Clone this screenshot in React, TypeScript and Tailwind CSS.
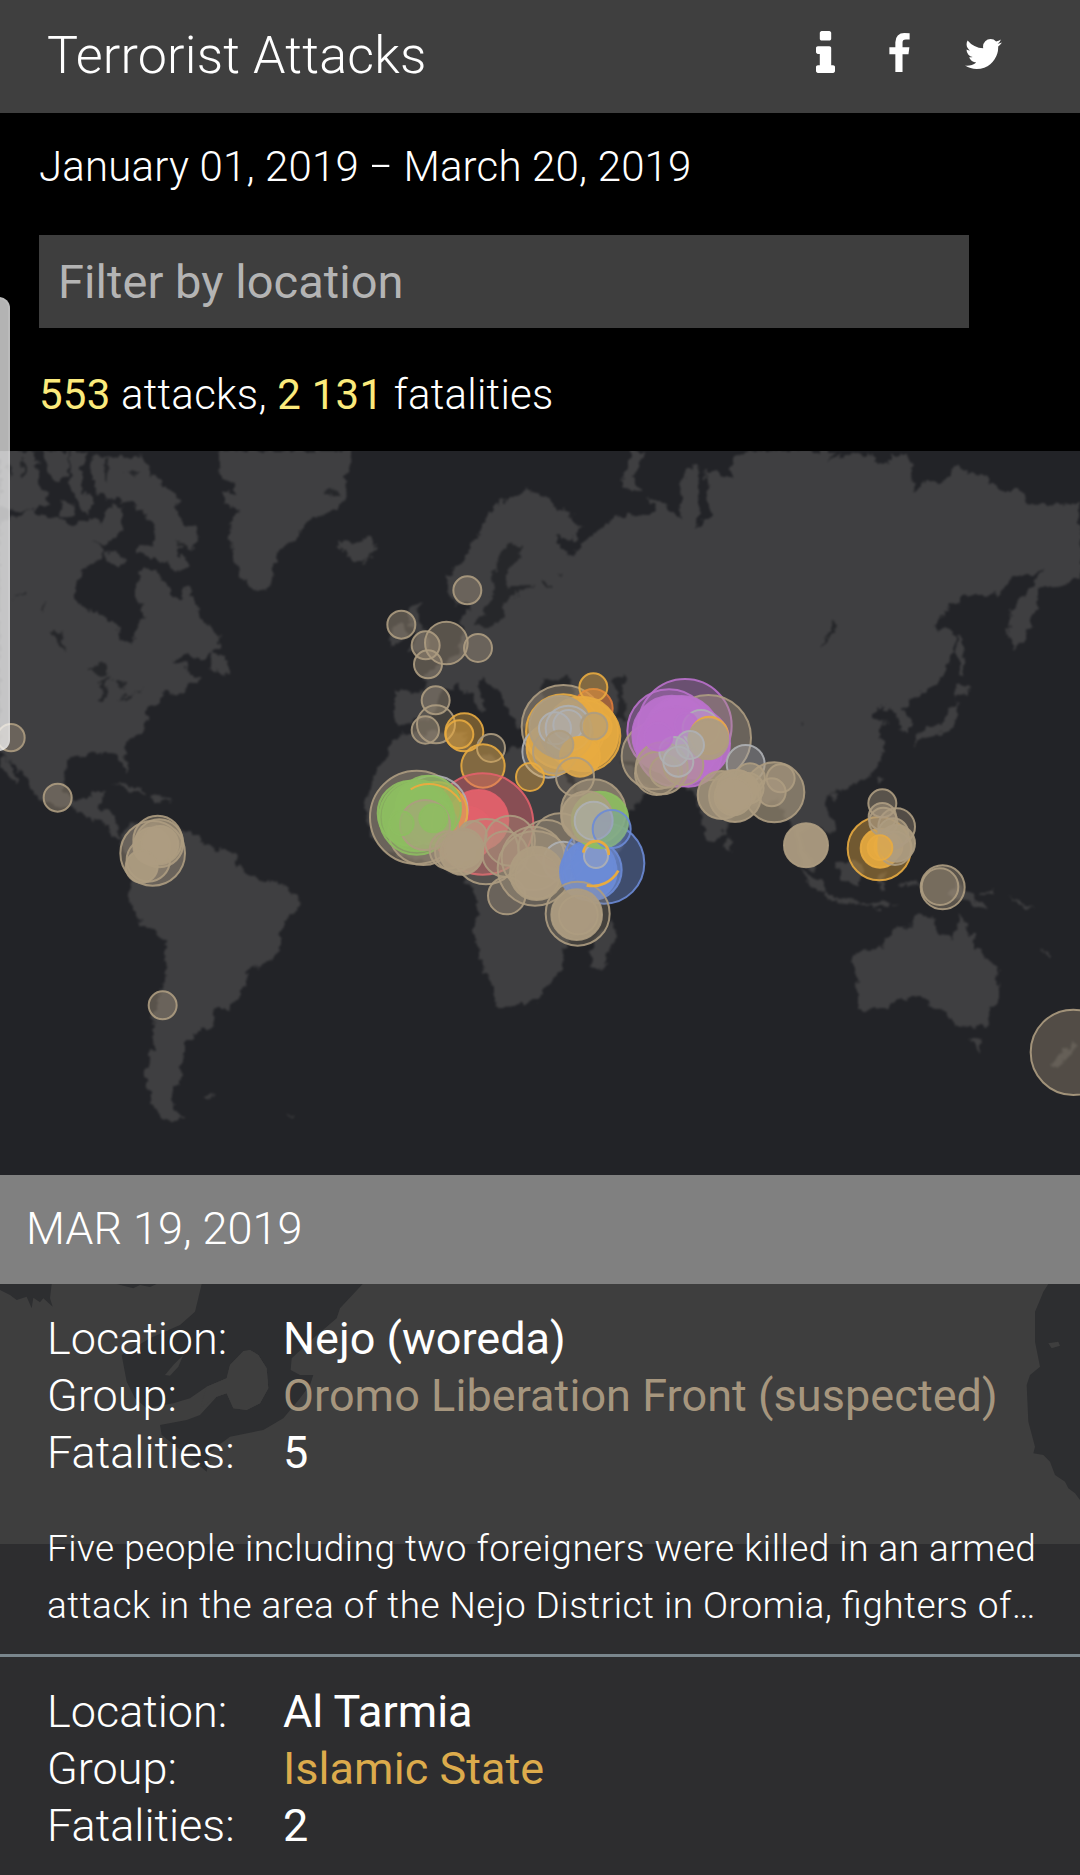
import { useState } from 'react'

type Tone = 'tan' | 'gold' | 'green' | 'red' | 'blue' | 'purple' | 'silver' | 'orange'

const TONES: Record<Tone, string> = {
  tan: '#ad9c81',
  gold: '#e8ab40',
  green: '#8dbe60',
  red: '#e2616c',
  blue: '#6c8bd6',
  purple: '#ba71cc',
  silver: '#aeb0b4',
  orange: '#dd7a38',
}

interface Attack {
  id: number
  location: string
  group: string
  groupClass: string
  fatalities: number
  summary: string
}

const ATTACKS: Attack[] = [
  {
    id: 1,
    location: 'Nejo (woreda)',
    group: 'Oromo Liberation Front (suspected)',
    groupClass: 'text-[#a6967e]',
    fatalities: 5,
    summary:
      'Five people including two foreigners were killed in an armed attack in the area of the Nejo District in Oromia, fighters of…',
  },
  {
    id: 2,
    location: 'Al Tarmia',
    group: 'Islamic State',
    groupClass: 'text-[#dcab4c]',
    fatalities: 2,
    summary: '',
  },
]

// map units: 3 per pixel
const LAND = [
  // north america
  'M0 205 50 200 90 180 130 200 180 205 220 225 270 200 300 230 320 190 340 160 370 170 365 230 350 260 320 290 280 270 300 290 310 330 280 335 240 370 222 425 240 465 290 490 350 520 362 570 395 590 405 550 425 500 425 460 408 440 415 370 440 358 480 375 500 400 510 440 535 450 562 412 575 430 600 500 655 550 658 590 610 630 560 615 515 640 560 640 565 670 610 680 545 722 500 730 450 770 430 840 385 880 372 900 385 950 380 972 360 930 345 910 290 908 260 920 220 920 192 960 195 1020 215 1055 260 1045 275 1025 315 1020 305 1075 350 1100 350 1150 365 1165 340 1160 320 1125 270 1105 215 1075 150 1060 105 1040 90 1000 50 960 0 900Z',
  'M0 3 110 3 115 80 140 140 150 160 90 180 40 190 0 170Z',
  'M130 3 210 3 205 70 170 105 140 60Z',
  'M215 3 270 3 240 60 245 120 280 160 260 190 235 160 210 110Z',
  'M280 20 430 20 445 60 540 150 520 185 598 250 575 300 545 285 540 310 568 350 540 362 410 300 420 285 460 288 472 240 440 190 390 160 290 130 275 60Z',
  'M310 312 350 300 380 340 340 347Z',
  'M180 160 225 165 220 205 185 200Z',
  'M625 655 645 600 690 640 690 670Z',
  'M5 920 20 925 55 990 45 1000 0 950Z',
  'M335 1005 365 998 445 1030 440 1040 370 1010Z',
  'M455 1042 520 1048 520 1056 455 1052Z',
  // greenland, iceland
  'M655 3 1060 3 1035 80 1040 140 1000 185 920 215 880 275 835 295 815 380 795 425 730 395 705 330 685 260 690 200 715 180 670 160 665 120 715 130 660 80Z',
  'M1010 270 1060 282 1110 260 1130 295 1085 340 1040 325Z',
  // south america
  'M360 1155 400 1120 570 1145 620 1180 650 1200 700 1210 725 1265 790 1290 850 1300 895 1340 895 1365 850 1425 840 1480 820 1525 745 1560 735 1610 685 1680 640 1680 650 1715 620 1740 585 1745 580 1770 555 1770 555 1820 535 1855 550 1875 520 1920 515 1960 550 2000 520 2018 480 2005 445 1930 440 1860 460 1790 460 1700 490 1610 498 1530 495 1470 430 1430 380 1335 395 1270 370 1200Z',
  'M605 1945 640 1938 620 1952Z',
  'M862 1988 885 1992 872 2000Z',
  // eurasia
  'M1185 722 1270 725 1275 690 1290 660 1330 640 1370 615 1390 560 1385 500 1400 480 1420 490 1400 450 1370 462 1345 430 1340 380 1390 330 1440 240 1480 170 1570 120 1630 140 1700 190 1745 230 1730 265 1660 258 1690 310 1720 318 1745 280 1800 240 1850 200 1950 192 1965 170 1940 140 2000 170 2040 200 2045 120 2060 50 2095 50 2100 200 2085 240 2130 200 2110 60 2200 85 2190 40 2210 15 2280 3 2510 3 2480 40 2530 10 2610 20 2660 45 2670 20 2730 20 2735 100 2750 125 2770 95 2845 90 2850 55 2910 60 2960 80 2990 120 3060 120 3080 160 3190 165 3240 155 3240 380 3180 410 3120 415 3100 500 3070 570 3040 600 3025 540 3030 480 3090 410 3130 360 3060 380 3015 400 3000 435 2890 440 2830 490 2800 530 2860 545 2865 590 2840 660 2770 730 2730 750 2710 780 2730 800 2730 850 2705 850 2695 800 2650 770 2610 790 2620 810 2660 820 2630 840 2650 890 2645 930 2600 985 2520 1020 2475 1040 2470 1070 2505 1110 2505 1140 2480 1150 2430 1120 2400 1150 2440 1255 2420 1260 2390 1190 2370 1110 2320 1050 2210 1080 2180 1130 2145 1180 2125 1170 2110 1120 2080 1030 2040 1000 1960 950 1860 930 1900 960 1940 1020 1900 1080 1810 1110 1760 1060 1690 930 1680 870 1640 855 1570 830 1545 825 1520 770 1490 720 1450 690 1430 700 1460 760 1440 780 1400 720 1370 705 1330 730 1310 760 1290 800 1220 820 1195 825 1185 800Z',
  'M1890 3 1930 3 1915 50 1905 90 1925 130 1880 115 1860 90 1885 50Z',
  'M1230 470 1260 460 1250 500 1290 560 1280 600 1220 610 1245 560 1220 490Z',
  'M1168 590 1175 540 1210 520 1220 565Z',
  // africa
  'M1210 850 1290 850 1400 840 1395 880 1440 910 1500 930 1530 890 1670 910 1690 960 1740 1050 1810 1110 1840 1130 1890 1125 1850 1230 1790 1330 1790 1400 1700 1480 1685 1550 1650 1590 1640 1620 1605 1650 1550 1672 1490 1675 1480 1630 1455 1560 1440 1500 1418 1450 1435 1390 1420 1320 1390 1280 1300 1240 1150 1200 1100 1130 1095 1070 1110 1010 1150 930 1180 870Z',
  'M1770 1510 1795 1460 1840 1410 1850 1440 1810 1560 1775 1555Z',
  // south-east asia, japan
  'M2180 1150 2200 1180 2190 1205 2178 1190Z',
  'M2632 975 2645 978 2635 1010Z',
  'M2490 1032 2515 1030 2505 1052Z',
  'M2510 1245 2560 1230 2590 1250 2585 1305 2530 1295Z',
  'M2400 1255 2470 1300 2475 1332 2440 1310Z',
  'M2475 1335 2560 1352 2650 1362 2700 1362 2640 1372 2480 1348Z',
  'M2630 1280 2660 1270 2645 1300 2655 1325 2635 1320Z',
  'M2700 1300 2760 1298 2760 1306 2700 1308Z',
  'M2870 1300 2920 1330 2965 1380 2910 1360 2850 1340Z',
  'M2940 1332 2985 1318 2985 1326 2950 1340Z',
  'M3020 1330 3095 1375 3085 1380Z',
  'M3120 1500 3160 1515 3150 1522Z',
  'M2870 550 2882 550 2895 620 2885 680 2875 670Z',
  'M2870 700 2915 715 2870 745 2862 730Z',
  'M2865 745 2872 800 2850 850 2770 865 2745 890 2745 860 2820 820 2850 790Z',
  // australia, new zealand
  'M2555 1540 2570 1510 2650 1490 2650 1470 2700 1430 2735 1430 2745 1395 2815 1405 2805 1435 2855 1470 2875 1390 2910 1440 2925 1485 2995 1555 3000 1620 2965 1690 2955 1730 2870 1730 2840 1680 2800 1675 2770 1640 2690 1650 2660 1670 2590 1685 2575 1670 2580 1640Z',
  'M2910 1765 2945 1770 2930 1808Z',
  'M3150 1835 3190 1805 3220 1770 3235 1785 3205 1820 3175 1855Z',
]

const WATER = [
  // great lakes and the canadian shield
  'M262 665 300 640 335 660 330 675Z',
  'M300 745 305 690 340 685 317 702 315 745Z',
  'M345 690 385 700 365 718Z',
  'M350 748 392 736 388 744Z',
  'M395 720 432 716 415 726Z',
  'M160 545 185 548 188 580 203 610 175 582Z',
  'M38 445 75 428 80 434Z',
  'M132 470 140 460 138 490Z',
  // arctic fjords
  'M315 30 330 25 325 95 312 80Z',
  'M380 70 425 60 400 75Z',
  'M20 40 35 50 28 90Z',
  'M60 20 80 60 70 90Z',
  'M530 265 545 280 560 300 540 290Z',
  'M970 120 1010 115 1025 140 1005 142Z',
  // baltic
  'M1540 285 1568 280 1555 320 1530 360 1520 410 1605 408 1550 428 1520 440 1510 500 1480 528 1415 530 1440 500 1475 450 1480 400 1480 370 1500 330 1515 290Z',
  'M1625 400 1640 390 1650 410Z',
  'M1675 370 1688 375 1680 385Z',
  // black sea, caspian
  'M1615 720 1630 685 1660 695 1700 675 1710 690 1720 740 1640 745Z',
  'M1840 690 1870 670 1880 690 1865 720 1880 780 1870 815 1850 810 1855 760Z',
  // baikal
  'M2508 515 2512 540 2475 580 2455 590 2490 550Z',
  'M2400 818 2410 812 2412 822Z',
]

type Dot = [x: number, y: number, r: number, tone: Tone, fill?: number]

const DOTS: Dot[] = [
  [33, 863, 41, 'tan'],
  [173, 1043, 42, 'tan'],
  [458, 1210, 97, 'tan'],
  [473, 1170, 73, 'tan'],
  [445, 1230, 65, 'tan'],
  [478, 1180, 72, 'tan', 0.6],
  [455, 1188, 55, 'tan', 0.95],
  [480, 1183, 55, 'tan', 0.95],
  [425, 1250, 48, 'tan', 0.9],
  [488, 1666, 42, 'tan'],
  // europe
  [1402, 421, 42, 'tan'],
  [1204, 524, 42, 'tan'],
  [1277, 586, 42, 'tan'],
  [1339, 579, 64, 'tan'],
  [1434, 594, 42, 'tan'],
  [1284, 643, 42, 'tan'],
  [1307, 751, 42, 'tan'],
  [1308, 823, 57, 'tan', 0.25],
  [1276, 840, 41, 'tan'],
  [1393, 847, 57, 'gold'],
  [1378, 853, 42, 'gold'],
  [1473, 894, 42, 'tan', 0.25],
  [1449, 948, 65, 'gold'],
  // levant and iraq
  [1690, 830, 125, 'tan'],
  [1690, 845, 112, 'gold', 0.5],
  [1780, 775, 58, 'orange', 0.6],
  [1755, 858, 106, 'gold', 0.6],
  [1745, 850, 110, 'gold', 0.9],
  [1645, 905, 78, 'silver', 0.3],
  [1660, 895, 80, 'gold', 0.8],
  [1665, 905, 66, 'tan', 0.3],
  [1680, 830, 92, 'tan', 0.85],
  [1700, 850, 78, 'tan', 0.5],
  [1705, 835, 68, 'silver', 0.3],
  [1665, 835, 48, 'silver', 0.3],
  [1705, 825, 45, 'silver', 0.3],
  [1740, 920, 60, 'gold', 0.9],
  [1793, 830, 42, 'gold', 0.8],
  [1782, 828, 40, 'tan', 0.6],
  [1678, 884, 42, 'tan', 0.7],
  [1780, 712, 42, 'gold'],
  [1725, 980, 57, 'tan', 0.2],
  [1590, 981, 42, 'gold'],
  // afghanistan and pakistan
  [2055, 827, 140, 'purple', 0.35],
  [2007, 843, 125, 'purple', 0.4],
  [2125, 863, 128, 'tan'],
  [1965, 918, 100, 'tan'],
  [2085, 880, 105, 'purple', 0.9],
  [2065, 910, 100, 'purple', 0.8],
  [2015, 855, 118, 'purple', 0.95],
  [2045, 850, 112, 'purple', 0.95],
  [2030, 890, 120, 'purple', 0.7],
  [1985, 955, 78, 'tan', 0.5],
  [1970, 970, 65, 'tan', 0.4],
  [1998, 965, 48, 'tan', 0.4],
  [2103, 835, 55, 'silver', 0.4],
  [2058, 822, 34, 'purple', 0.8],
  [2128, 856, 56, 'gold', 0.6],
  [2125, 868, 60, 'tan', 0.95],
  [2050, 945, 60, 'tan', 0.5],
  [2022, 905, 44, 'silver', 0.5],
  [2070, 885, 42, 'silver', 0.5],
  [2035, 935, 45, 'silver', 0.3],
  [1975, 860, 42, 'purple', 0.8],
  // india
  [2237, 942, 57, 'silver', 0.35],
  [2323, 1027, 90, 'tan', 0.6],
  [2342, 985, 42, 'tan', 0.5],
  [2315, 1027, 42, 'tan', 0.5],
  [2250, 985, 45, 'tan', 0.6],
  [2165, 1035, 72, 'tan', 0.8],
  [2205, 1038, 78, 'tan', 0.8],
  [2210, 1020, 60, 'tan', 0.8],
  [2245, 1015, 46, 'tan', 0.6],
  [2200, 1040, 56, 'tan', 0.9],
  // west africa
  [1250, 1102, 140, 'tan'],
  [1448, 1122, 152, 'red', 0.45],
  [1435, 1110, 90, 'red', 0.95],
  [1400, 1150, 80, 'red', 0.8],
  [1300, 1080, 103, 'silver', 0.2],
  [1310, 1088, 92, 'gold', 0.5],
  [1270, 1140, 105, 'tan', 0.35],
  [1250, 1102, 112, 'green', 0.5],
  [1230, 1090, 97, 'green', 0.6],
  [1285, 1075, 98, 'green', 0.7],
  [1252, 1100, 104, 'green', 0.85],
  [1275, 1125, 75, 'tan', 0.5],
  [1205, 1120, 36, 'green', 0.6],
  [1300, 1105, 42, 'green', 0.8],
  // gulf of guinea
  [1530, 1172, 75, 'tan', 0.3],
  [1458, 1205, 98, 'tan', 0.2],
  [1515, 1212, 68, 'tan', 0.3],
  [1418, 1155, 42, 'tan', 0.7],
  [1345, 1200, 56, 'tan', 0.4],
  [1365, 1205, 60, 'tan', 0.5],
  [1385, 1210, 64, 'tan', 0.9],
  [1392, 1195, 58, 'tan', 0.9],
  // congo basin
  [1680, 1175, 85, 'tan', 0.3],
  [1640, 1195, 85, 'tan', 0.3],
  [1605, 1255, 112, 'tan', 0.35],
  [1600, 1225, 95, 'tan', 0.3],
  [1520, 1337, 56, 'tan'],
  [1690, 1235, 60, 'silver', 0.3],
  [1610, 1270, 80, 'tan', 0.95],
  [1612, 1280, 66, 'tan', 0.5],
  // somalia, kenya
  [1812, 1240, 121, 'blue', 0.4],
  [1765, 1265, 85, 'blue', 0.9],
  [1775, 1260, 90, 'blue', 0.7],
  [1780, 1245, 65, 'blue', 0.9],
  [1788, 1218, 36, 'silver', 0.35],
  // sudan
  [1780, 1085, 97, 'tan', 0.6],
  [1800, 1110, 85, 'green', 0.9],
  [1760, 1100, 76, 'tan', 0.8],
  [1781, 1112, 57, 'silver', 0.5],
  [1835, 1137, 57, 'blue', 0.3],
  // mozambique
  [1733, 1391, 96, 'tan', 0.25],
  [1730, 1394, 76, 'tan', 0.95],
  [1735, 1395, 58, 'tan', 0.4],
  // south-east asia
  [2418, 1186, 66, 'tan', 0.95],
  [2638, 1196, 95, 'gold'],
  [2640, 1195, 58, 'gold', 0.9],
  [2665, 1190, 42, 'gold', 0.8],
  [2647, 1060, 42, 'tan'],
  [2690, 1130, 55, 'tan', 0.35],
  [2647, 1100, 41, 'tan', 0.5],
  [2650, 1115, 42, 'tan', 0.4],
  [2690, 1180, 55, 'tan', 0.9],
  [2680, 1150, 45, 'tan', 0.6],
  [2685, 1195, 50, 'tan', 0.4],
  [2640, 1193, 37, 'gold', 0.7],
  [2828, 1312, 66, 'tan', 0.4],
  [2820, 1310, 55, 'tan', 0.35],
  [3220, 1807, 128, 'tan', 0.35],
]

function WorldMap() {
  return (
    <svg viewBox="0 3 3240 2172" className="block h-[724px] w-full bg-[#222327]">
      <filter id="coast" x="0" y="0" width="100%" height="100%" colorInterpolationFilters="sRGB">
        <feTurbulence type="fractalNoise" baseFrequency="0.035" numOctaves="3" seed="4" />
        <feDisplacementMap in="SourceGraphic" scale="36" xChannelSelector="R" yChannelSelector="G" />
        <feGaussianBlur stdDeviation="2.5" />
      </filter>
      <g filter="url(#coast)">
        <rect x="-60" y="-60" width="3360" height="2300" fill="#222327" />
        <path d={LAND.join('')} fill="#3f3f41" />
        <path d={WATER.join('')} fill="#26272a" />
      </g>
      {DOTS.map(([x, y, r, tone, fill = 0.4], i) => (
        <circle
          key={i}
          cx={x}
          cy={y}
          r={r}
          fill={TONES[tone]}
          fillOpacity={fill}
          stroke={TONES[tone]}
          strokeOpacity="0.9"
          strokeWidth="6"
        />
      ))}
      <g fill="none" stroke={TONES.gold} strokeWidth="8">
        <path d="M1232 1018A110 110 0 0 1 1382 1055" strokeWidth="6" />
        <path d="M1750 1208A38 38 0 1 1 1826 1215" />
        <path d="M1760 1306A88 88 0 0 0 1855 1262" />
      </g>
    </svg>
  )
}

// stretched tiles left behind the list while the map loads
function ListBackdrop() {
  return (
    <svg viewBox="0 27 3240 1119" className="absolute inset-x-0 top-0 h-[373px] w-full">
      <rect y="27" width="3240" height="780" fill="#3e3e3e" />
      <g fill="#2d2e30">
        <path d="M0 27H155L150 70 158 95 130 70 120 82 100 68 95 100 80 65 50 75 30 60 0 45Z" />
        <path d="M350 27H470L450 36 420 30 400 40 370 32Z" />
        <path d="M605 27H1088L1020 100 1010 130 940 190 875 250 872 285 900 300 940 300 930 330 900 370 850 430 790 465 690 485 630 530 620 590 560 540 485 480 480 450 560 435 600 420 650 365 680 355 700 400 740 405 780 385 805 340 800 280 775 240 750 225 730 230 690 270 680 310 620 335 570 370 520 385 440 400 405 370 380 320 365 240 450 190 540 150 585 110Z" />
        <path d="M3145 27H3240V675L3225 655 3205 640 3195 620 3165 600 3150 560 3130 540 3100 535 3105 515 3085 440 3080 330 3090 300 3120 275 3105 200 3105 110 3120 75 3130 50Z" />
      </g>
      {/* islands */}
      <g fill="#3e3e3e">
        <path d="M495 300 520 270 550 240 535 275 510 302Z" />
        <path d="M690 270 730 228 750 225 775 240 800 280 805 340 780 385 740 405 700 400 680 355 650 365 600 400 620 335 680 310Z" />
        <path d="M3145 205 3175 200 3180 212 3155 220Z" />
      </g>
    </svg>
  )
}

function HeaderIcons() {
  return (
    <div className="flex items-start fill-white">
      <svg viewBox="576 128 640 1408" className="mt-[31px] h-[42px] w-[19px]">
        <path d="M1216 1344v128q0 26-19 45t-45 19h-512q-26 0-45-19t-19-45v-128q0-26 19-45t45-19h64v-384h-64q-26 0-45-19t-19-45v-128q0-26 19-45t45-19h384q26 0 45 19t19 45v576h64q26 0 45 19t19 45zm-128-1152v192q0 26-19 45t-45 19h-256q-26 0-45-19t-19-45v-192q0-26 19-45t45-19h256q26 0 45 19t19 45z" />
      </svg>
      <svg viewBox="479 0 864 1664" className="mt-[33px] ml-[54px] h-[39px] w-[21px]">
        <path d="M1343 12v264h-157q-86 0-116 36t-30 108v189h293l-39 296h-254v759h-306v-759h-255v-296h255v-218q0-186 104-288.500t277-102.500q147 0 228 12z" />
      </svg>
      <svg viewBox="108 256 1576 1280" className="mt-[39px] ml-[55px] h-[30px] w-[37px]">
        <path d="M1684 408q-67 98-162 167 1 14 1 42 0 130-38 259.500t-115.500 248.500-184.500 210.500-258 146-323 54.500q-271 0-496-145 35 4 78 4 225 0 401-138-105-2-188-64.500t-114-159.500q33 5 61 5 43 0 85-11-112-23-185.500-111.500t-73.500-205.500v-4q68 38 146 41-66-44-105-115t-39-154q0-88 44-163 121 149 294.500 238.500t371.500 99.500q-8-38-8-74 0-134 94.500-228.500t228.500-94.500q140 0 236 102 109-21 205-78-37 115-142 178 93-10 186-50z" />
      </svg>
    </div>
  )
}

function AttackRow({ attack }: { attack: Attack }) {
  return (
    <li className="relative h-[373px] overflow-hidden border-b-[3px] border-[#7a868d] pt-[26px] pl-[47px]">
      <dl className="grid grid-cols-[236px_1fr] text-[45px] leading-[57px] whitespace-nowrap">
        <dt>Location:</dt>
        <dd className="font-normal">{attack.location}</dd>
        <dt>Group:</dt>
        <dd className={`font-normal tracking-[0.06px] ${attack.groupClass}`}>{attack.group}</dd>
        <dt>Fatalities:</dt>
        <dd className="font-normal">{attack.fatalities}</dd>
      </dl>
      <p className="mt-[39px] w-[1010px] text-[37px] leading-[57px] tracking-[0.48px] [font-feature-settings:'liga'_1]">
        {attack.summary}
      </p>
    </li>
  )
}

export default function App() {
  const [query, setQuery] = useState('')

  return (
    <div className="relative h-[1875px] w-[1080px] overflow-hidden bg-[#2d2d2f] font-['Roboto',sans-serif] font-light text-white">
      <header className="flex h-[113px] items-start justify-between bg-[#3f3f3f] pr-[78px] pl-[47px]">
        <h1 className="mt-[26px] text-[52px] leading-[60px] tracking-[0.2px]">Terrorist Attacks</h1>
        <HeaderIcons />
      </header>

      <section className="h-[338px] bg-black pt-[29px] pl-[39px]">
        <p className="text-[42px] leading-[50px] tracking-[0.18px]">
          January 01, 2019 <span className="-mx-[2px] inline-block origin-center scale-x-[0.84]">–</span> March 20, 2019
        </p>
        <input
          value={query}
          onChange={(e) => setQuery(e.target.value)}
          placeholder="Filter by location"
          className="mt-[43px] block h-[93px] w-[930px] bg-[#3e3e3e] px-[19px] text-[47px] font-normal tracking-[0.05px] text-white outline-none placeholder:text-[#b4b4b4]"
        />
        <p className="mt-[42px] text-[42px] leading-[50px] tracking-[0.25px]">
          <b className="font-normal text-[#fbea7c]">553</b> attacks,{' '}
          <b className="font-normal text-[#fbea7c]">2 131</b> fatalities
        </p>
      </section>

      <WorldMap />

      <h2 className="h-[109px] bg-[#808080] pt-[25px] pl-[26px] text-[45px] leading-[57px]">MAR 19, 2019</h2>
      <div className="relative">
        <ListBackdrop />
        <ul>
          {ATTACKS.map((attack) => (
            <AttackRow key={attack.id} attack={attack} />
          ))}
        </ul>
      </div>

      {/* edge panel handle */}
      <div className="absolute top-[297px] -left-3 h-[454px] w-[22px] rounded-[14px] border-2 border-white/10 bg-white/70" />
    </div>
  )
}
